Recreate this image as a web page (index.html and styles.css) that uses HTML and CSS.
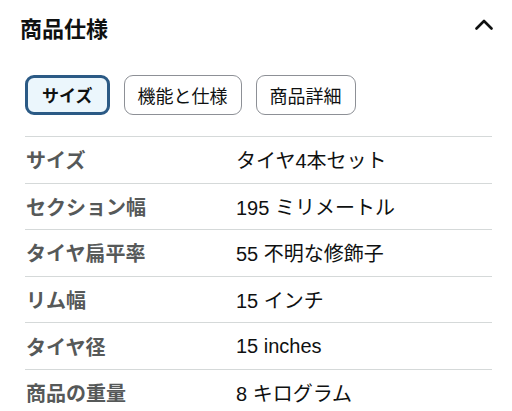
FILE: index.html
```html
<!DOCTYPE html>
<html lang="ja">
<head>
<meta charset="utf-8">
<link rel="stylesheet" href="styles.css">
</head>
<body>
<div class="panel">
  <div class="header">
    <h2 class="title">商品仕様</h2>
    <svg class="chev" width="18" height="11" viewBox="0 0 18 11"><path d="M1.5 9.5 L9 2 L16.5 9.5" fill="none" stroke="#0f1111" stroke-width="2.6" stroke-linecap="round" stroke-linejoin="round"/></svg>
  </div>
  <div class="tabs">
    <button class="tab active">サイズ</button>
    <button class="tab">機能と仕様</button>
    <button class="tab">商品詳細</button>
  </div>
  <div class="table">
    <div class="row"><div class="label">サイズ</div><div class="value">タイヤ4本セット</div></div>
    <div class="row"><div class="label">セクション幅</div><div class="value">195 ミリメートル</div></div>
    <div class="row"><div class="label">タイヤ扁平率</div><div class="value">55 不明な修飾子</div></div>
    <div class="row"><div class="label">リム幅</div><div class="value">15 インチ</div></div>
    <div class="row"><div class="label">タイヤ径</div><div class="value">15 inches</div></div>
    <div class="row"><div class="label">商品の重量</div><div class="value">8 キログラム</div></div>
  </div>
</div>
</body>
</html>
```

FILE: styles.css
```css
html, body {
  margin: 0;
  padding: 0;
  background: #ffffff;
}
body {
  font-family: "Noto Sans CJK JP", "Noto Sans", "Liberation Sans", sans-serif;
  color: #0f1111;
}
.panel {
  width: 512px;
  overflow: hidden;
}
.header {
  display: flex;
  justify-content: space-between;
  align-items: center;
  padding: 11px 19px 0 20px;
  height: 33px;
}
.title {
  margin: 0;
  font-size: 22px;
  font-weight: 700;
  line-height: 33px;
}
.chev {
  display: block;
  margin-top: -6px;
}
.tabs {
  display: flex;
  gap: 14px;
  padding: 31px 0 0 25px;
}
.tab {
  font-family: inherit;
  font-size: 18px;
  line-height: 24px;
  color: #0f1111;
  background: #ffffff;
  border: 1px solid #8d9096;
  border-radius: 9px;
  height: 40px;
  padding: 0 13px;
  box-sizing: border-box;
}
.tab.active {
  font-weight: 700;
  font-size: 17px;
  border: 3px solid #2b5a85;
  background: #ebf6fc;
  padding: 0 14px;
}
.table {
  margin: 21px 20px 0 25px;
  border-top: 1px solid #d5d9d9;
}
.row {
  display: grid;
  grid-template-columns: 211px 1fr;
  border-bottom: 1px solid #d5d9d9;
  height: 45.6px;
  align-items: center;
  font-size: 20px;
}
.label {
  color: #565959;
  font-weight: 700;
  padding-left: 1px;
}
.value {
  color: #0f1111;
  font-family: "Liberation Sans", "Noto Sans CJK JP", sans-serif;
}
```
